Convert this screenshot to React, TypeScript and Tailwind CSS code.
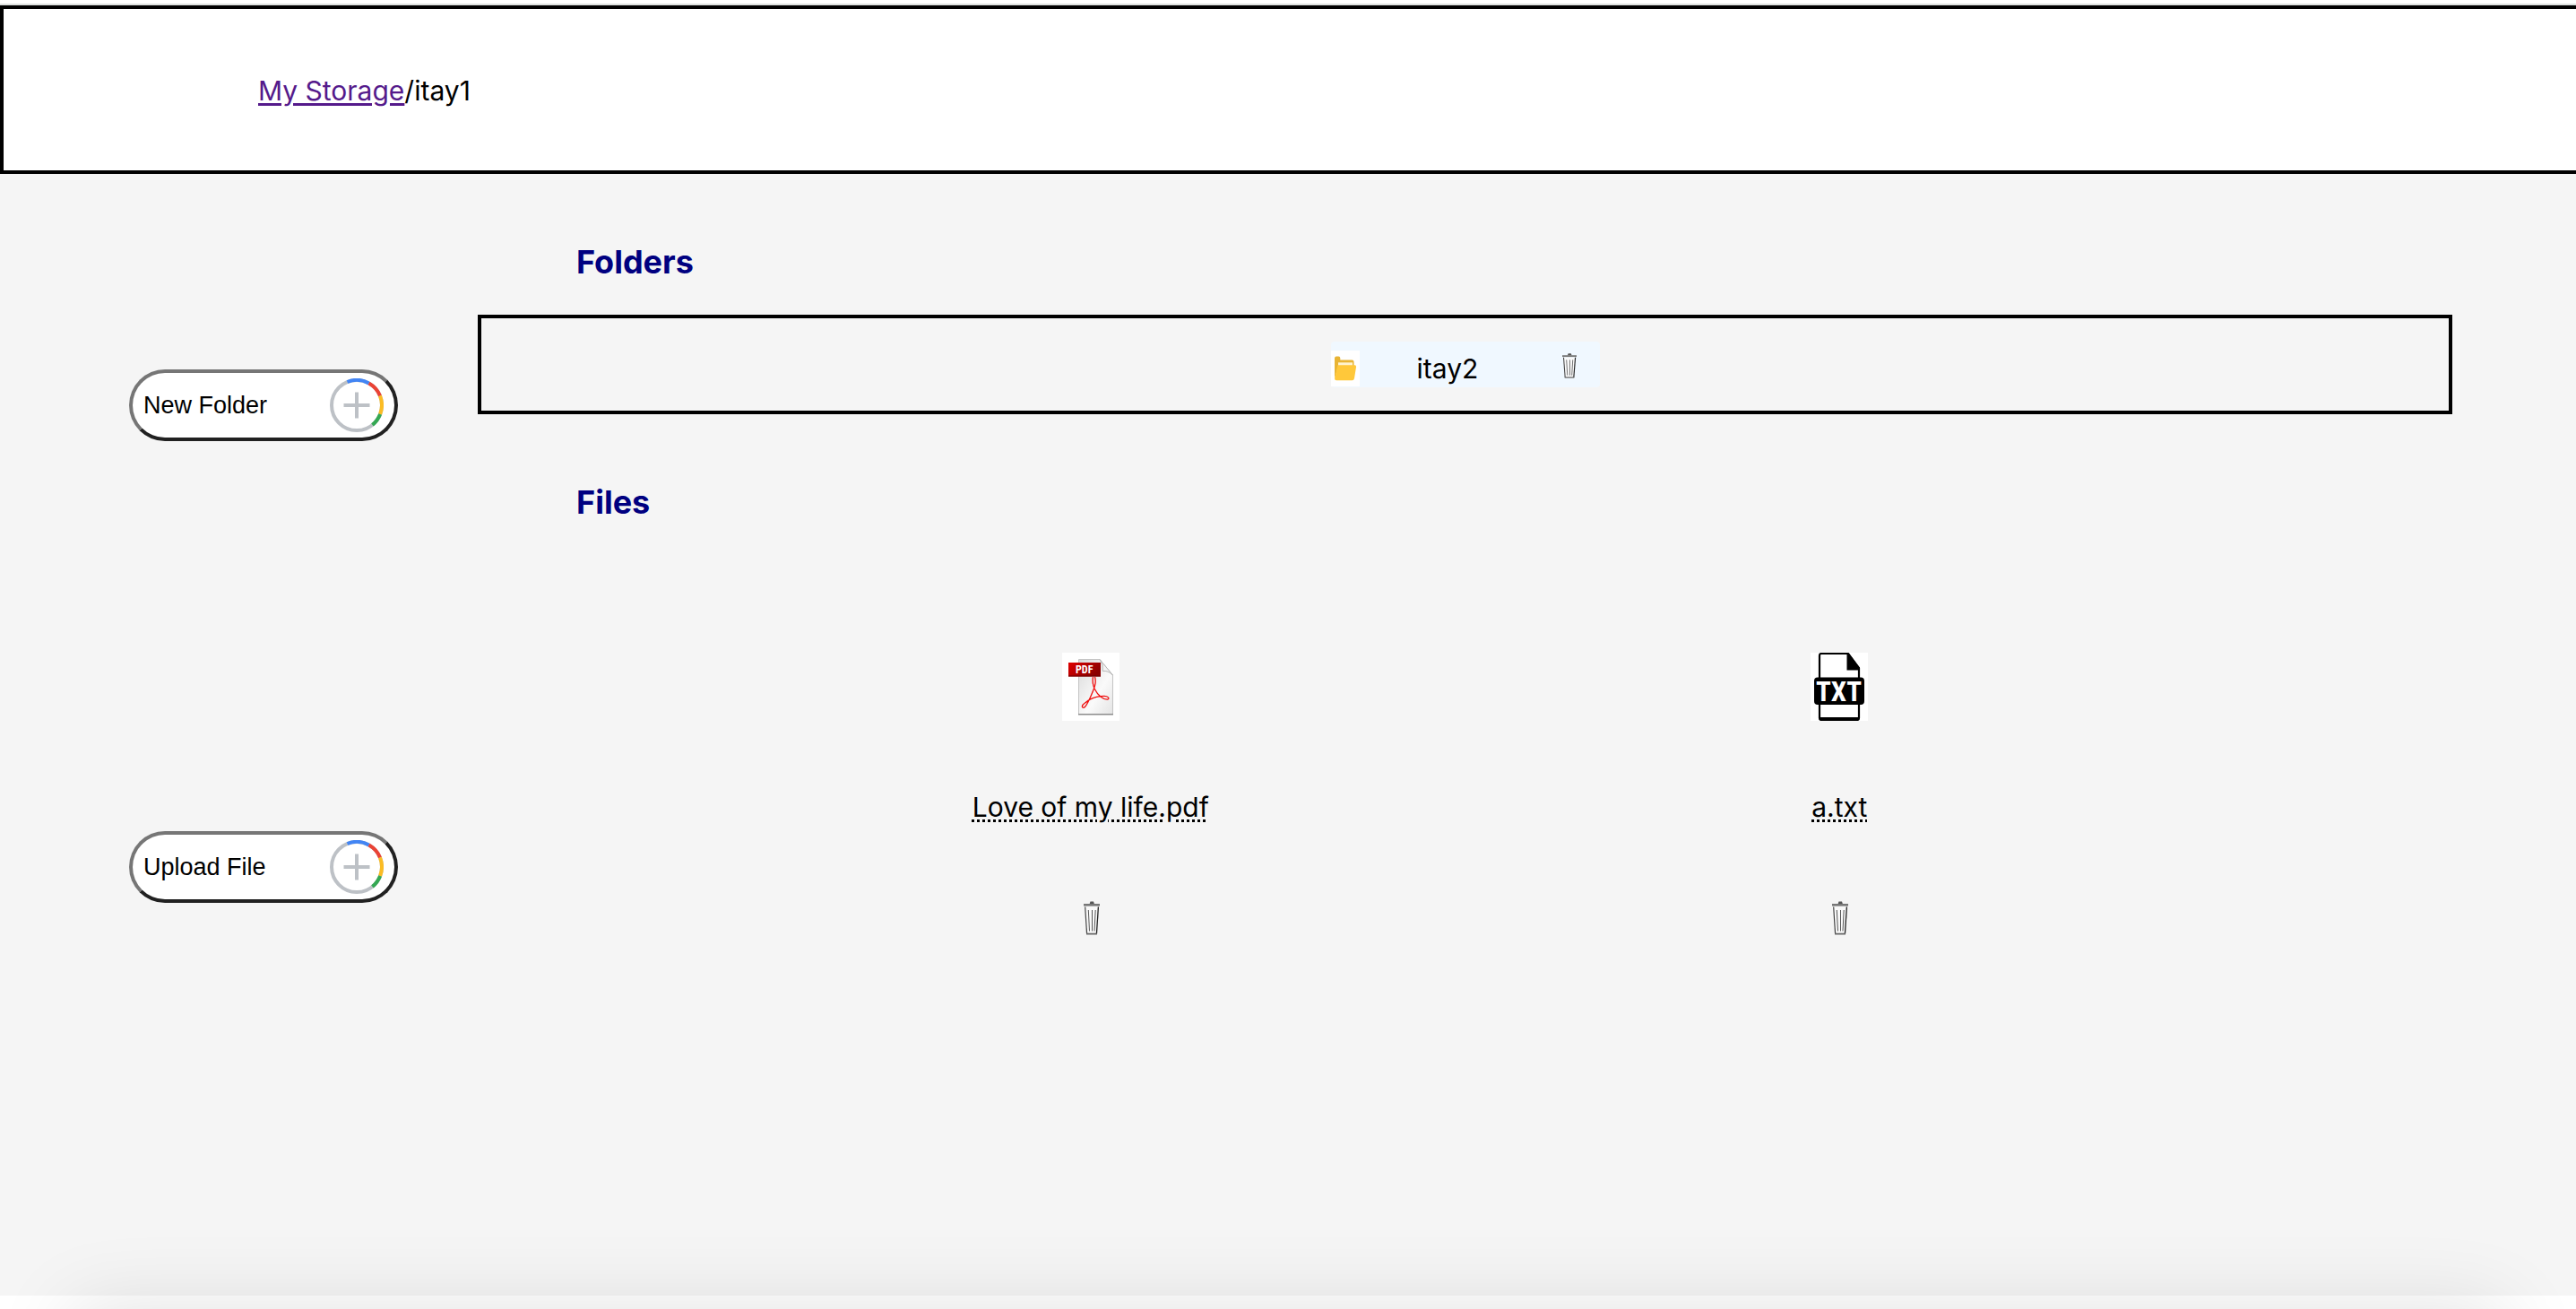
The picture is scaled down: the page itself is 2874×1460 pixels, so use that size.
import React from "react";

function TrashIcon({ className }: { className: string }) {
  return (
    <svg viewBox="0 0 18 38" className={className} preserveAspectRatio="none" aria-hidden="true">
      <path d="M6.5 3.5 L7.5 0.5 H11 L12 3.5 Z" fill="#555" />
      <rect x="0" y="3" width="18" height="2.6" fill="#777" />
      <path d="M1.5 6.5 H16.5 L14.6 37 H3.4 Z" fill="#fafafa" />
      <path d="M1.7 6.5 L3.6 36.6" stroke="#444" strokeWidth="1.2" fill="none" />
      <path d="M16.4 6.5 L14.4 36.6" stroke="#222" strokeWidth="1.3" fill="none" />
      <path d="M3 36.6 H15" stroke="#666" strokeWidth="1.8" />
      <path d="M5.3 10 L6.5 33.5 M13.2 10 L12 33.5" stroke="#444" strokeWidth="0.9" fill="none" />
      <path d="M9.5 10 V33.5" stroke="#555" strokeWidth="1" />
    </svg>
  );
}

function FolderIcon() {
  return (
    <svg viewBox="0 0 32 40" className="mb-px h-10 w-8 bg-white" aria-hidden="true">
      <path d="M4 31 V8.5 Q4 6.5 6 6.5 H8.5 Q10.3 6.5 10.3 8.5 V10.5 H23.5 Q25.5 10.5 25.5 12.5 V18 H8 Z" fill="#e8b434" />
      <rect x="8" y="13.3" width="16" height="4" fill="#fff3cf" />
      <path d="M7.5 16.3 H26.5 Q28.4 16.3 28 18.5 L26 31 Q25.6 33.3 23.5 33.3 H6 Q4 33.3 4 31 Z" fill="#ffc83a" />
    </svg>
  );
}

function PlusRing() {
  return (
    <svg viewBox="-30 -30 60 60" className="size-15 shrink-0" fill="none" strokeWidth="4" aria-hidden="true">
      <circle r="28" stroke="#bdc1c6" />
      <path d="M-10.5 -26 A28 28 0 0 1 13.6 -24.5" stroke="#4285f4" />
      <path d="M13.6 -24.5 A28 28 0 0 1 26 -10.5" stroke="#ea4335" />
      <path d="M26 -10.5 A28 28 0 0 1 26.1 10" stroke="#fbbc24" />
      <path d="M26.1 10 A28 28 0 0 1 17.5 21.9" stroke="#34a853" />
      <path d="M-14.5 0 H14.5 M0 -14.5 V14.5" stroke="#bdc1c6" />
    </svg>
  );
}

function PdfIcon() {
  return (
    <svg viewBox="0 0 64 76" className="h-19 w-16 bg-white" aria-hidden="true">
      <defs>
        <linearGradient id="sheet" x1="0" y1="0" x2="1" y2="1">
          <stop offset="0" stopColor="#d9d9d9" />
          <stop offset="0.6" stopColor="#fafafa" />
          <stop offset="1" stopColor="#e4e4e4" />
        </linearGradient>
        <linearGradient id="label" x1="0" y1="0" x2="1" y2="0.5">
          <stop offset="0" stopColor="#e00000" />
          <stop offset="1" stopColor="#8a0000" />
        </linearGradient>
      </defs>
      <path d="M18.5 7.5 H42 L56.5 25 V68.5 H18.5 Z" fill="url(#sheet)" stroke="#c4c4c4" />
      <path d="M18 68.7 H57" stroke="#8c8c8c" strokeWidth="1.4" />
      <path d="M42 7.5 Q46.5 13 45.3 20.5 Q51 19.5 56.5 25 Z" fill="#f4f4f4" stroke="#b8b8b8" />
      <rect x="7" y="11" width="36" height="15.5" fill="url(#label)" />
      <path d="M7 26 H43" stroke="#6d0000" />
      <text
        x="24.7"
        y="23"
        textAnchor="middle"
        className="fill-white font-['Roboto_Condensed',Roboto,sans-serif] text-[12px] font-bold"
      >
        PDF
      </text>
      <path
        d="M34.5 27 C33.5 32 34.8 37 36 40 C40 48 46 52.5 51 52 C53 51 51.5 48.5 47 48.4 C41 48.3 35 50 30.5 52.3 M36.5 27 C37.8 31 37 36 35.5 40 C32 49 28 59 24.5 61.2 C21.5 62 21.5 58.5 25.5 56 C27.5 54.5 29 53.5 30.5 52.3"
        fill="none"
        stroke="#f01010"
        strokeWidth="1.3"
      />
    </svg>
  );
}

function TxtIcon() {
  return (
    <svg viewBox="0 0 64 76" className="h-19 w-16 bg-white" aria-hidden="true">
      <path d="M12 1 H42 L54 17 V73 Q54 75 52 75 H12 Q10 75 10 73 V3 Q10 1 12 1 Z" fill="#fff" stroke="#000" strokeWidth="2.2" />
      <path d="M10 73.5 H54" stroke="#000" strokeWidth="3" />
      <path d="M40.5 1 H43 L55 17 V19.5 H40.5 Z" fill="#000" />
      <rect x="4" y="27.5" width="56" height="30.5" rx="4" fill="#000" />
      <text
        x="31.5"
        y="53.5"
        textAnchor="middle"
        className="fill-white font-['Roboto_Condensed',Roboto,sans-serif] text-[31px] font-bold"
      >
        TXT
      </text>
    </svg>
  );
}

function ActionButton({ label }: { label: string }) {
  return (
    <button
      type="button"
      className="flex h-20 w-75 items-center justify-between rounded-full border-4 border-t-[#767676] border-r-[#212121] border-b-[#212121] border-l-[#767676] bg-white px-3 font-['Liberation_Sans',sans-serif] text-[27px] text-black"
    >
      {label}
      <PlusRing />
    </button>
  );
}

const files = [
  { name: "Love of my life.pdf", Icon: PdfIcon },
  { name: "a.txt", Icon: TxtIcon },
];

export default function App() {
  return (
    <div className="relative flex min-h-screen flex-col overflow-hidden bg-white pt-1 font-[Inter,sans-serif] text-[30px] leading-10 text-black">
      <header className="border-t-2 border-[#dfe2e0]">
        <nav aria-label="Breadcrumb" className="flex h-[188px] items-center border-y-4 border-l-4 border-black pt-0.5 pl-[284px]">
          <a href="#" className="text-[#551a8b] underline decoration-3 underline-offset-3">My Storage</a>
          <span>/itay1</span>
        </nav>
      </header>

      <div className="mb-[15px] flex grow bg-[#f5f5f5] pr-[138px] pl-36">
        <aside className="flex w-75 shrink-0 flex-col gap-[435px] pt-[218px]">
          <ActionButton label="New Folder" />
          <ActionButton label="Upload File" />
        </aside>

        <main className="ml-[89px] grow pt-17">
          <h2 className="ml-[110px] text-[36px] leading-15 font-bold text-[#000080]">Folders</h2>
          <ul className="mt-[29px] flex h-[111px] justify-center border-4 border-black pt-[26px]">
            <li className="flex h-[51px] w-75 items-end rounded bg-[#f0f8ff] pr-[26px]">
              <FolderIcon />
              <span className="ml-16 grow self-center pt-2">itay2</span>
              <button type="button" aria-label="Delete itay2" className="mb-[10px]">
                <TrashIcon className="h-7 w-4" />
              </button>
            </li>
          </ul>

          <h2 className="mt-17 ml-[110px] text-[36px] leading-15 font-bold text-[#000080]">Files</h2>
          <ul className="mt-[138px] grid grid-cols-2 px-[266px]">
            {files.map(({ name, Icon }) => (
              <li key={name} className="flex flex-col items-center">
                <Icon />
                <a href="#" className="mt-19 underline decoration-dotted decoration-3 underline-offset-3">{name}</a>
                <button type="button" aria-label={`Delete ${name}`} className="mt-[85px] pl-0.5">
                  <TrashIcon className="h-[38px] w-[18px]" />
                </button>
              </li>
            ))}
          </ul>
        </main>
      </div>
      <div className="pointer-events-none absolute inset-x-20 -bottom-40 h-40 shadow-[0_0_90px_rgba(0,0,0,0.12)]" />
    </div>
  );
}
